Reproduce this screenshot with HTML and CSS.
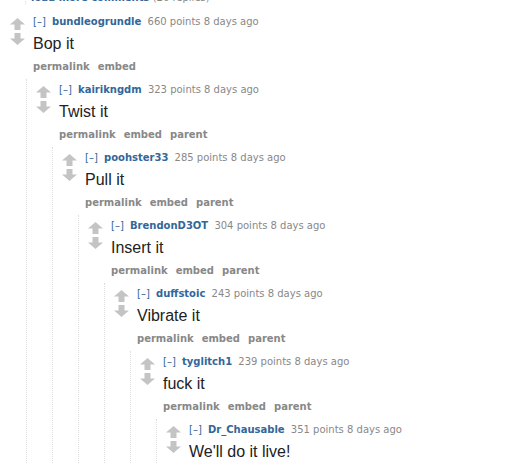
FILE: index.html
```html
<!DOCTYPE html>
<html lang="en">
<head>
  <meta charset="UTF-8" />
  <title>comments</title>
  <link rel="stylesheet" href="styles.css">
</head>
<body>
  <div class="morecomments"><a href="#">load more comments</a> <span class="gray">(26 replies)</span></div>

  <div class="comment top">
    <div class="row">
      <div class="midcol">
        <svg class="arrow" viewBox="0 0 15 12"><path d="M7.5 0 L15 6.5 L10.5 6.5 L10.5 12 L4.5 12 L4.5 6.5 L0 6.5 Z"/></svg>
        <svg class="arrow" viewBox="0 0 15 12"><path d="M7.5 12 L15 5.5 L10.5 5.5 L10.5 0 L4.5 0 L4.5 5.5 L0 5.5 Z"/></svg>
      </div>
      <div class="entry">
        <p class="tagline"><a href="#" class="expand">[–]</a> <a href="#" class="author">bundleogrundle</a> <span class="score">660 points</span> <time>8 days ago</time></p>
        <div class="md">Bop it</div>
        <ul class="buttons"><li>permalink</li><li>embed</li></ul>
      </div>
    </div>

    <div class="comment">
      <div class="row">
        <div class="midcol">
          <svg class="arrow" viewBox="0 0 15 12"><path d="M7.5 0 L15 6.5 L10.5 6.5 L10.5 12 L4.5 12 L4.5 6.5 L0 6.5 Z"/></svg>
          <svg class="arrow" viewBox="0 0 15 12"><path d="M7.5 12 L15 5.5 L10.5 5.5 L10.5 0 L4.5 0 L4.5 5.5 L0 5.5 Z"/></svg>
        </div>
        <div class="entry">
          <p class="tagline"><a href="#" class="expand">[–]</a> <a href="#" class="author">kairikngdm</a> <span class="score">323 points</span> <time>8 days ago</time></p>
          <div class="md">Twist it</div>
          <ul class="buttons"><li>permalink</li><li>embed</li><li>parent</li></ul>
        </div>
      </div>

      <div class="comment">
        <div class="row">
          <div class="midcol">
            <svg class="arrow" viewBox="0 0 15 12"><path d="M7.5 0 L15 6.5 L10.5 6.5 L10.5 12 L4.5 12 L4.5 6.5 L0 6.5 Z"/></svg>
            <svg class="arrow" viewBox="0 0 15 12"><path d="M7.5 12 L15 5.5 L10.5 5.5 L10.5 0 L4.5 0 L4.5 5.5 L0 5.5 Z"/></svg>
          </div>
          <div class="entry">
            <p class="tagline"><a href="#" class="expand">[–]</a> <a href="#" class="author">poohster33</a> <span class="score">285 points</span> <time>8 days ago</time></p>
            <div class="md">Pull it</div>
            <ul class="buttons"><li>permalink</li><li>embed</li><li>parent</li></ul>
          </div>
        </div>

        <div class="comment">
          <div class="row">
            <div class="midcol">
              <svg class="arrow" viewBox="0 0 15 12"><path d="M7.5 0 L15 6.5 L10.5 6.5 L10.5 12 L4.5 12 L4.5 6.5 L0 6.5 Z"/></svg>
              <svg class="arrow" viewBox="0 0 15 12"><path d="M7.5 12 L15 5.5 L10.5 5.5 L10.5 0 L4.5 0 L4.5 5.5 L0 5.5 Z"/></svg>
            </div>
            <div class="entry">
              <p class="tagline"><a href="#" class="expand">[–]</a> <a href="#" class="author">BrendonD3OT</a> <span class="score">304 points</span> <time>8 days ago</time></p>
              <div class="md">Insert it</div>
              <ul class="buttons"><li>permalink</li><li>embed</li><li>parent</li></ul>
            </div>
          </div>

          <div class="comment">
            <div class="row">
              <div class="midcol">
                <svg class="arrow" viewBox="0 0 15 12"><path d="M7.5 0 L15 6.5 L10.5 6.5 L10.5 12 L4.5 12 L4.5 6.5 L0 6.5 Z"/></svg>
                <svg class="arrow" viewBox="0 0 15 12"><path d="M7.5 12 L15 5.5 L10.5 5.5 L10.5 0 L4.5 0 L4.5 5.5 L0 5.5 Z"/></svg>
              </div>
              <div class="entry">
                <p class="tagline"><a href="#" class="expand">[–]</a> <a href="#" class="author">duffstoic</a> <span class="score">243 points</span> <time>8 days ago</time></p>
                <div class="md">Vibrate it</div>
                <ul class="buttons"><li>permalink</li><li>embed</li><li>parent</li></ul>
              </div>
            </div>

            <div class="comment">
              <div class="row">
                <div class="midcol">
                  <svg class="arrow" viewBox="0 0 15 12"><path d="M7.5 0 L15 6.5 L10.5 6.5 L10.5 12 L4.5 12 L4.5 6.5 L0 6.5 Z"/></svg>
                  <svg class="arrow" viewBox="0 0 15 12"><path d="M7.5 12 L15 5.5 L10.5 5.5 L10.5 0 L4.5 0 L4.5 5.5 L0 5.5 Z"/></svg>
                </div>
                <div class="entry">
                  <p class="tagline"><a href="#" class="expand">[–]</a> <a href="#" class="author">tyglitch1</a> <span class="score">239 points</span> <time>8 days ago</time></p>
                  <div class="md">fuck it</div>
                  <ul class="buttons"><li>permalink</li><li>embed</li><li>parent</li></ul>
                </div>
              </div>

              <div class="comment">
                <div class="row">
                  <div class="midcol">
                    <svg class="arrow" viewBox="0 0 15 12"><path d="M7.5 0 L15 6.5 L10.5 6.5 L10.5 12 L4.5 12 L4.5 6.5 L0 6.5 Z"/></svg>
                    <svg class="arrow" viewBox="0 0 15 12"><path d="M7.5 12 L15 5.5 L10.5 5.5 L10.5 0 L4.5 0 L4.5 5.5 L0 5.5 Z"/></svg>
                  </div>
                  <div class="entry">
                    <p class="tagline"><a href="#" class="expand">[–]</a> <a href="#" class="author">Dr_Chausable</a> <span class="score">351 points</span> <time>8 days ago</time></p>
                    <div class="md">We'll do it live!</div>
                    <ul class="buttons"><li>permalink</li><li>embed</li><li>parent</li></ul>
                  </div>
                </div>
              </div>
            </div>
          </div>
        </div>
      </div>
    </div>
  </div>
</body>
</html>
```

FILE: styles.css
```css
:root {
  --font-small: 'DejaVu Sans', Verdana, sans-serif;
  --font-body: 'Liberation Sans', Arial, sans-serif;
  --blue: #336699;
  --gray: #888888;
  --arrow: #c4c4c4;
  --rule: #dddddd;
}

* {
  box-sizing: border-box;
}

body {
  margin: 0;
  background: #ffffff;
  color: #222222;
  font-family: var(--font-small);
  overflow: hidden;
  height: 464px;
}

a {
  text-decoration: none;
}

/* the line above is cut by the top edge */
.morecomments {
  margin: -8px 0 0 25px;
  height: 12px;
  padding-left: 5px;
  border-left: 1px dotted var(--rule);
  font-size: 10px;
  line-height: 12px;
}
.morecomments a {
  color: var(--blue);
  font-weight: bold;
}
.morecomments .gray {
  color: var(--gray);
}

.comment {
  border-left: 1px dotted var(--rule);
  padding-left: 9px;
  margin-left: 16px;
}
.comment.top {
  border-left-color: transparent;
  margin-left: 0;
  margin-top: 7px;
}

.row {
  display: flex;
}

.midcol {
  width: 23px;
  flex-shrink: 0;
  display: flex;
  flex-direction: column;
  padding-top: 7px;
  gap: 3px;
}

.arrow {
  width: 15px;
  height: 12px;
  fill: var(--arrow);
}

.entry {
  padding-top: 4px;
}

.tagline {
  margin: 0;
  font-size: 10px;
  line-height: 14px;
  color: var(--gray);
}
.tagline .expand {
  color: var(--blue);
}
.tagline .author {
  color: var(--blue);
  font-weight: bold;
  margin: 0 3px 0 3px;
}

.md {
  font-family: var(--font-body);
  font-size: 16px;
  line-height: 20px;
  color: #222222;
  margin: 5px 0 0;
}

.buttons {
  list-style: none;
  margin: 0;
  padding: 7px 0 6px;
  display: flex;
  gap: 8px;
  font-size: 10px;
  line-height: 12px;
  font-weight: bold;
  color: var(--gray);
}
```
